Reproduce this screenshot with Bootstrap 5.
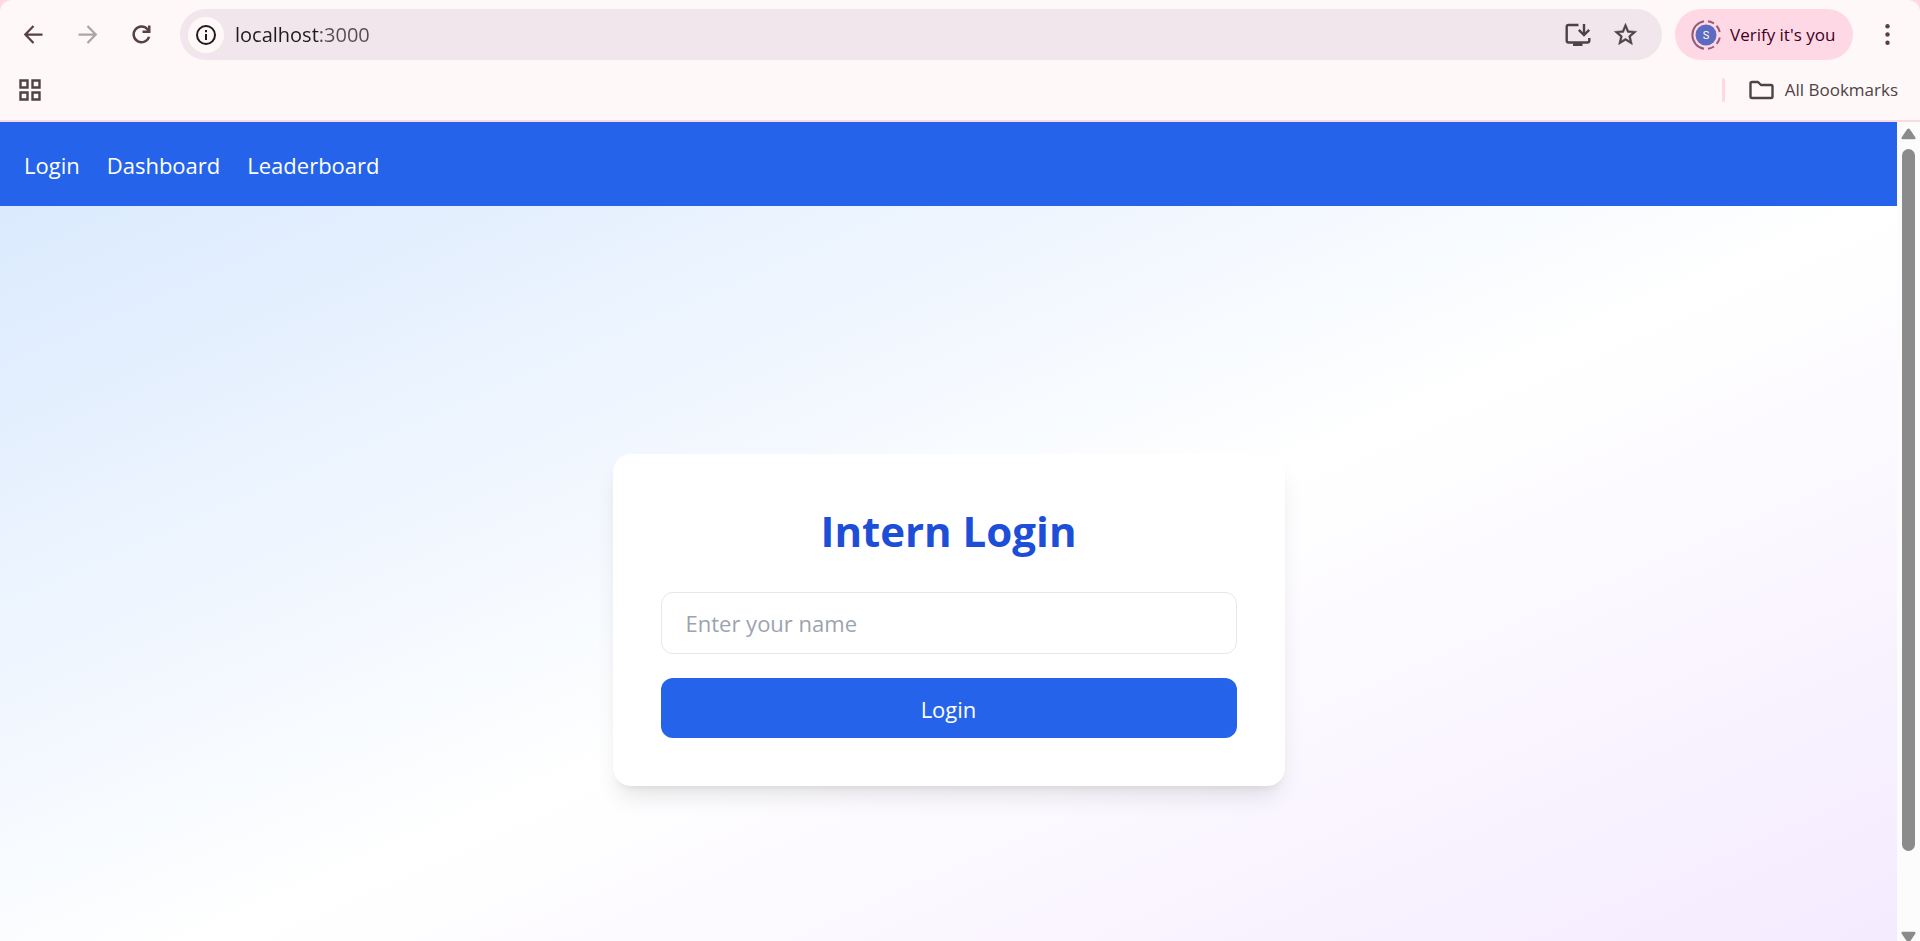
<!DOCTYPE html>
<html lang="en">
<head>
<meta charset="utf-8">
<meta name="viewport" content="width=device-width, initial-scale=1">
<title>Intern Login</title>
<link href="https://cdn.jsdelivr.net/npm/bootstrap@5.3.0/dist/css/bootstrap.min.css" rel="stylesheet">
<style>
  body { font-family: "Open Sans", "Noto Sans", sans-serif; font-size: 22px; line-height: 36px; background: #ffd8e6; color: #201a1b; }
  .window-top { background: #fff8f8; border-radius: 12px 12px 0 0; border-bottom: 1px solid #f0dee3; margin-bottom: 1px; }
  .window-top svg { display: block; margin: 0 auto; }
  .tool-row { padding: 9px 6px; }
  .tool-btn { width: 54px; height: 51px; color: #574147; background: none; border: 0; padding: 0; }
  .tool-btn:disabled { color: #aca5a6; }
  .omnibox { height: 51px; border-radius: 26px; background: #f0e6eb; margin-left: 12px; margin-right: 13px; padding: 0 13px 0 8px; }
  .site-info { width: 36px; height: 36px; border-radius: 50%; background: #fff8f8; color: #201a1b; border: 0; padding: 0; }
  .address { border: 0; outline: 0; font-size: 20px; line-height: 30px; margin-left: 11px; padding: 0;
    background: linear-gradient(90deg, #201a1b 84px, #574d51 84px); background-clip: text; -webkit-background-clip: text; -webkit-text-fill-color: transparent; }
  .omni-btn { width: 48px; height: 48px; color: #4d4346; background: none; border: 0; padding: 0; }
  .verify { height: 51px; width: 178px; border-radius: 26px; border: 0; background: #ffd8e6; color: #3e0021; font-size: 17px; line-height: 24px; margin-right: 7px; padding: 0 0 0 16px; gap: 9px; }
  .verify svg { margin: 0; }
  .bookmark-row { padding: 0 22px 9px 18px; height: 51px; }
  .bookmark-btn { background: none; border: 0; padding: 0; color: #4d4346; font-size: 17px; line-height: 24px; gap: 11px; }
  .split { width: 3px; height: 24px; border-radius: 2px; background: #ffd8e6; margin-right: 23px; }
  .page-view { background: #fff; }
  .site-nav { background: #2563eb; padding: 25px 24px 23px; gap: 27px; }
  .site-nav a { color: #fff; text-decoration: none; }
  .hero { min-height: 828px; background: linear-gradient(to bottom right, #dbeafe, #fff, #f3e8ff); }
  .login-card { width: 100%; max-width: 672px; padding: 48px; border-radius: 18px; background: #fff; box-shadow: 0 15px 23px -5px rgba(0,0,0,.1), 0 6px 9px -6px rgba(0,0,0,.1); }
  .login-title { font-size: 42px; line-height: 58px; font-weight: 700; color: #1d4ed8; margin-bottom: 32px; }
  .name-box { font-size: 22px; line-height: 36px; padding: 12px 24px; border: 1px solid #e5e7eb; border-radius: 12px; margin-bottom: 24px; }
  .name-box::placeholder { color: #9ca3af; }
  .login-btn, .login-btn:hover { font-size: 22px; line-height: 36px; padding: 13px 12px 11px; border: 0; border-radius: 12px; background: #2563eb; color: #fff; }
  .scroll-rail { width: 23px; background: #fcfcfc; padding: 6px 0 3px; }
  .scroll-thumb { width: 13px; height: 702px; border-radius: 7px; background: #8b8b8b; margin: 9px 0 80px; }
</style>
</head>
<body class="vh-100 overflow-hidden d-flex flex-column">
<header class="window-top flex-shrink-0">
  <div class="tool-row d-flex align-items-center">
    <button class="tool-btn" type="button" aria-label="Back"><svg width="27" height="27" viewBox="0 0 24 24" fill="none" stroke="currentColor" stroke-width="2"><path d="M20 12H5M12 4.5 4.7 12l7.3 7.5"/></svg></button>
    <button class="tool-btn" type="button" aria-label="Forward" disabled><svg width="27" height="27" viewBox="0 0 24 24" fill="none" stroke="currentColor" stroke-width="2"><path d="M4 12h15M12 4.5l7.3 7.5-7.3 7.5"/></svg></button>
    <button class="tool-btn" type="button" aria-label="Reload"><svg width="27" height="27" viewBox="0 0 24 24" fill="none" stroke="currentColor" stroke-width="2.2"><path d="M18.700 14A7 7 0 1 1 17.300 7.300L18.700 8.800M18.900 4v5.500h-6"/></svg></button>
    <div class="omnibox d-flex align-items-center flex-grow-1">
      <button class="site-info d-flex align-items-center justify-content-center" type="button" aria-label="View site information"><svg width="22" height="22" viewBox="0 0 22 22" fill="none" stroke="currentColor" stroke-width="2"><circle cx="11" cy="11" r="9"/><path d="M11 10v6M11 6v2.200"/></svg></button>
      <input class="address flex-grow-1" type="text" aria-label="Address" value="localhost:3000">
      <button class="omni-btn" type="button" aria-label="Install app"><svg width="27" height="27" viewBox="0 0 27 27" fill="none" stroke="currentColor" stroke-width="2.400"><path d="M14.500 4H4.500Q2.700 4 2.700 6v13.500q0 2 2 2h18.600q2 0 2-2V17M20 3v10.500M14.800 8.800l5.200 5.200 5.200-5.200"/><path d="M9 21h9.500v4H9z" fill="currentColor" stroke="none"/></svg></button>
      <button class="omni-btn" type="button" aria-label="Bookmark this tab"><svg width="27" height="27" viewBox="0 0 24 24" fill="currentColor" stroke="currentColor" stroke-width=".4"><path d="M22 9.24l-7.19-.62L12 2 9.19 8.63 2 9.24l5.46 4.73L5.82 21 12 17.27 18.18 21l-1.63-7.03L22 9.24zM12 15.4l-3.76 2.27 1-4.28-3.32-2.88 4.38-.38L12 6.1l1.71 4.04 4.38.38-3.32 2.88 1 4.28L12 15.4z"/></svg></button>
    </div>
    <button class="verify d-flex align-items-center" type="button">
      <svg width="30" height="30" viewBox="0 0 30 30" fill="none" stroke="#965c77" stroke-width="2" aria-hidden="true"><path d="M13 1.200A14 14 0 0 0 13 28.800M17 1.200a14 14 0 0 1 6 2.300M25.500 5.800a14 14 0 0 1 3.300 6.200M28.800 17.500a14 14 0 0 1-3.100 6.300M23 26.500a14 14 0 0 1-6 2.300"/><circle cx="15" cy="15" r="10.500" fill="#5c6bc0" stroke="none"/><text x="15" y="19" text-anchor="middle" font-size="11" font-family="Roboto, sans-serif" fill="#fff" stroke="none">S</text></svg>
      <span>Verify it's you</span>
    </button>
    <button class="tool-btn" type="button" aria-label="Menu"><svg width="27" height="27" viewBox="0 0 27 27" fill="currentColor"><circle cx="13.500" cy="5.300" r="2.200"/><circle cx="13.500" cy="13.500" r="2.200"/><circle cx="13.500" cy="21.700" r="2.200"/></svg></button>
  </div>
  <div class="bookmark-row d-flex align-items-center">
    <button class="bookmark-btn d-flex me-auto" type="button" aria-label="Apps"><svg width="24" height="24" viewBox="0 0 24 24" fill="none" stroke="currentColor" stroke-width="2.400"><path d="M2.500 2.500h7v7h-7zM14.500 2.500h7v7h-7zM2.500 14.500h7v7h-7zM14.500 14.500h7v7h-7z"/></svg></button>
    <div class="split"></div>
    <button class="bookmark-btn d-flex align-items-center" type="button"><svg width="26" height="24" viewBox="0 0 26 24" fill="none" stroke="currentColor" stroke-width="2.400" stroke-linejoin="round"><path d="M4 4h6l3 3h10q1.500 0 1.500 1.500v10q0 1.500-1.500 1.500H4q-1.500 0-1.500-1.500v-13Q2.500 4 4 4z"/></svg><span>All Bookmarks</span></button>
  </div>
</header>
<div class="page-view d-flex flex-grow-1 overflow-hidden">
  <div class="flex-grow-1">
    <nav class="site-nav d-flex" aria-label="Main">
      <a href="#login">Login</a>
      <a href="#dashboard">Dashboard</a>
      <a href="#leaderboard">Leaderboard</a>
    </nav>
    <main class="hero d-flex align-items-center justify-content-center" id="login">
      <form class="login-card">
        <h1 class="login-title text-center">Intern Login</h1>
        <input class="name-box form-control" type="text" placeholder="Enter your name" aria-label="Enter your name">
        <button class="login-btn btn w-100" type="button">Login</button>
      </form>
    </main>
  </div>
  <div class="scroll-rail d-flex flex-column align-items-center flex-shrink-0" aria-hidden="true">
    <svg class="flex-shrink-0" width="15" height="12" viewBox="0 0 15 12" fill="#8b8b8b"><path d="M6.300 1q1.200-1.200 2.400 0l5.600 8.300q.8 1.900-1 1.900H1.700q-1.800 0-1-1.900z"/></svg>
    <div class="scroll-thumb flex-shrink-0"></div>
    <svg class="flex-shrink-0" width="15" height="12" viewBox="0 0 15 12" fill="#8b8b8b"><path d="M6.300 11q1.200 1.200 2.400 0l5.600-8.300q.8-1.900-1-1.900H1.700q-1.800 0-1 1.900z"/></svg>
  </div>
</div>
<script src="https://cdn.jsdelivr.net/npm/bootstrap@5.3.0/dist/js/bootstrap.bundle.min.js"></script>
</body>
</html>
